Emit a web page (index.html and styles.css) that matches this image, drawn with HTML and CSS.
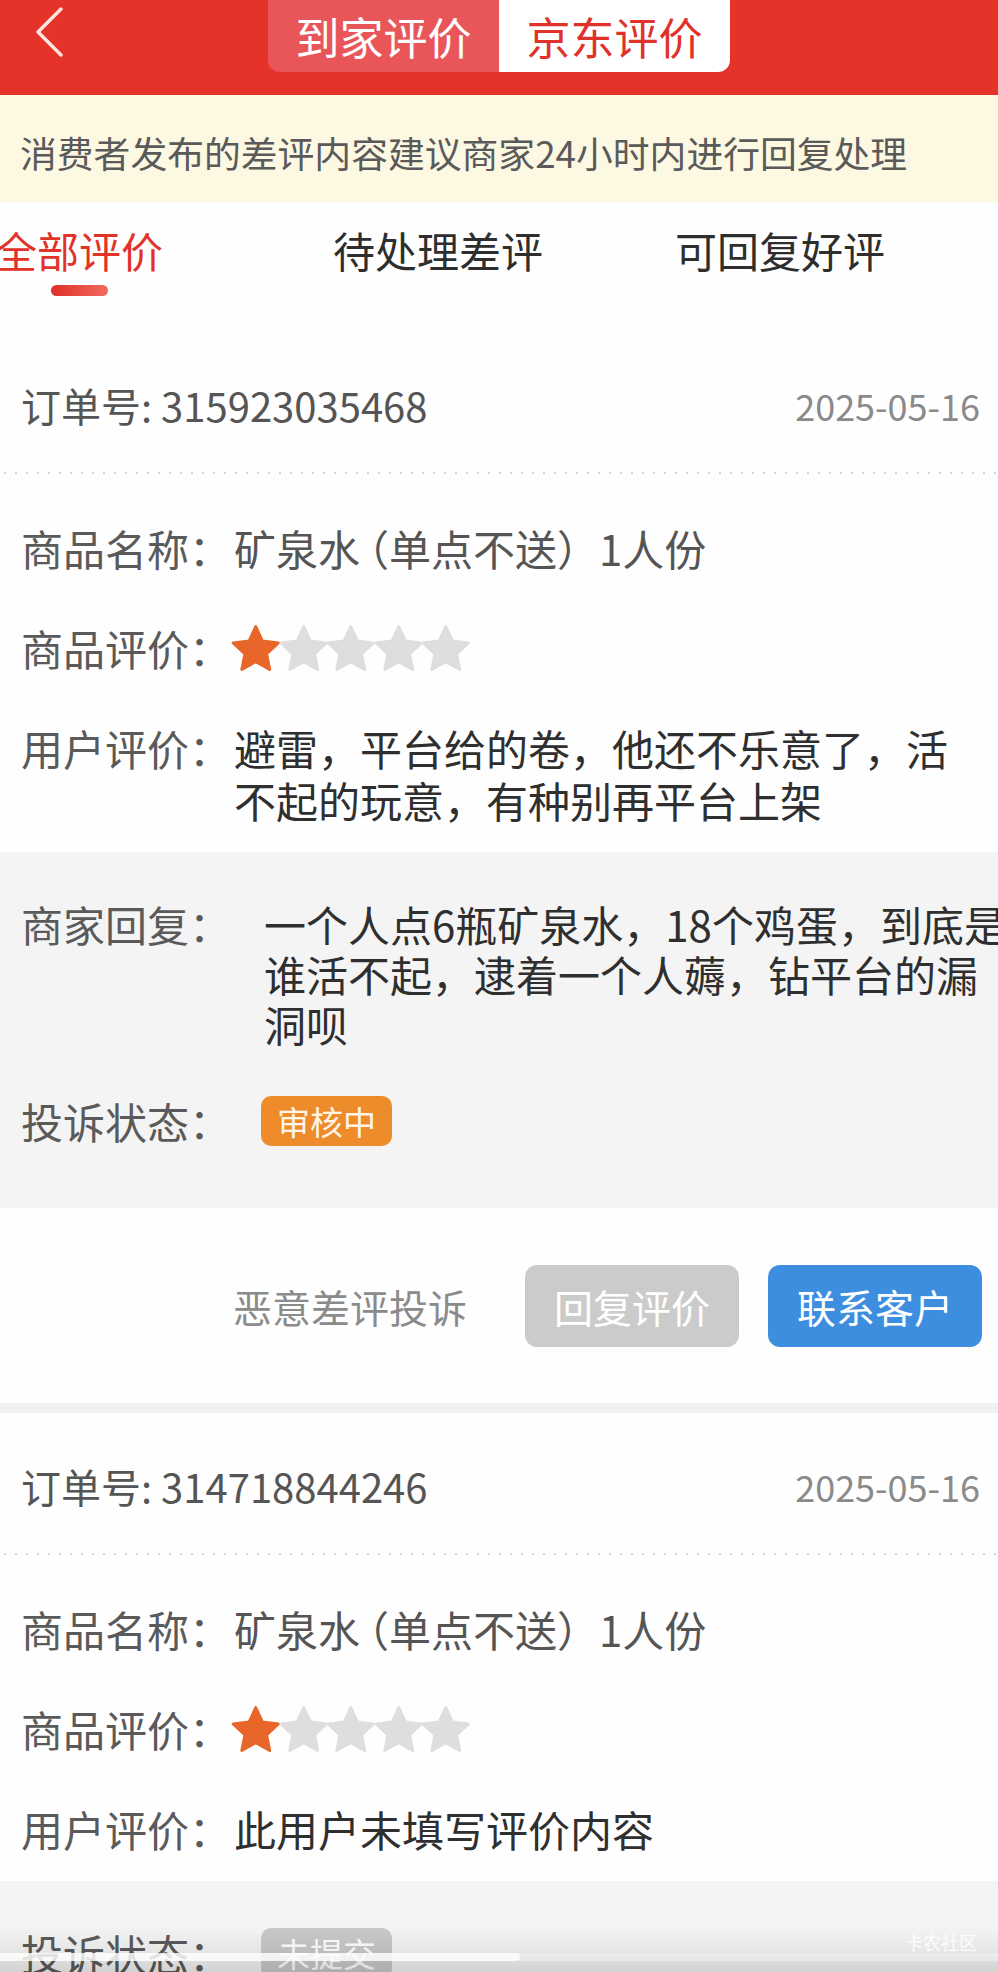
FILE: index.html
```html
<!DOCTYPE html>
<html lang="zh-CN">
<head>
<meta charset="utf-8">
<title>京东评价</title>
<link rel="stylesheet" href="styles.css">
</head>
<body>
<div class="page">
  <header class="topbar">
    <div class="topbar-left">
      <svg class="back" width="40" height="60" viewBox="0 0 40 60"><polyline points="31,7 8,30 31,53" fill="none" stroke="#fde4df" stroke-width="3.5" stroke-linecap="round" stroke-linejoin="round"/></svg>
    </div>
    <div class="seg">
      <span class="seg-item">到家评价</span>
      <span class="seg-item seg-active">京东评价</span>
    </div>
    <div class="topbar-right"></div>
  </header>

  <div class="notice">消费者发布的差评内容建议商家24小时内进行回复处理</div>

  <nav class="tabs">
    <div class="tab tab-active"><span class="tab-text">全部评价</span><span class="tab-line"></span></div>
    <div class="tab tab-2"><span class="tab-text">待处理差评</span></div>
    <div class="tab tab-3"><span class="tab-text">可回复好评</span></div>
  </nav>

  <section class="card">
    <div class="order">
      <span class="order-no">订单号: 315923035468</span>
      <span class="order-date">2025-05-16</span>
    </div>
    <div class="dots"></div>
    <div class="fields">
      <div class="field"><span class="label">商品名称：</span><span class="value muted">矿泉水<span class="halt">（</span>单点不送）1人份</span></div>
      <div class="field"><span class="label">商品评价：</span>
        <span class="stars">
          <svg class="star on" viewBox="0 0 48 48"><polygon points="24,2.3 30.76,17 46.83,18.88 34.94,29.85 38.11,45.72 24,37.8 9.89,45.72 13.06,29.85 1.17,18.88 17.24,17"/></svg>
          <svg class="star" viewBox="0 0 48 48"><polygon points="24,2.3 30.76,17 46.83,18.88 34.94,29.85 38.11,45.72 24,37.8 9.89,45.72 13.06,29.85 1.17,18.88 17.24,17"/></svg>
          <svg class="star" viewBox="0 0 48 48"><polygon points="24,2.3 30.76,17 46.83,18.88 34.94,29.85 38.11,45.72 24,37.8 9.89,45.72 13.06,29.85 1.17,18.88 17.24,17"/></svg>
          <svg class="star" viewBox="0 0 48 48"><polygon points="24,2.3 30.76,17 46.83,18.88 34.94,29.85 38.11,45.72 24,37.8 9.89,45.72 13.06,29.85 1.17,18.88 17.24,17"/></svg>
          <svg class="star" viewBox="0 0 48 48"><polygon points="24,2.3 30.76,17 46.83,18.88 34.94,29.85 38.11,45.72 24,37.8 9.89,45.72 13.06,29.85 1.17,18.88 17.24,17"/></svg>
        </span>
      </div>
      <div class="field"><span class="label">用户评价：</span><span class="value">避雷，平台给的卷，他还不乐意了，活不起的玩意，有种别再平台上架</span></div>
    </div>
    <div class="reply-box">
      <div class="rfield"><span class="rlabel">商家回复：</span><span class="rvalue">一个人点6瓶矿泉水，18个鸡蛋，到底是谁活不起，逮着一个人薅，钻平台的漏洞呗</span></div>
      <div class="rfield"><span class="rlabel">投诉状态：</span><span class="badge badge-orange">审核中</span></div>
    </div>
    <div class="actions">
      <span class="complain">恶意差评投诉</span>
      <span class="btn btn-gray">回复评价</span>
      <span class="btn btn-blue">联系客户</span>
    </div>
  </section>

  <section class="card">
    <div class="order">
      <span class="order-no">订单号: 314718844246</span>
      <span class="order-date">2025-05-16</span>
    </div>
    <div class="dots"></div>
    <div class="fields">
      <div class="field"><span class="label">商品名称：</span><span class="value muted">矿泉水<span class="halt">（</span>单点不送）1人份</span></div>
      <div class="field"><span class="label">商品评价：</span>
        <span class="stars">
          <svg class="star on" viewBox="0 0 48 48"><polygon points="24,2.3 30.76,17 46.83,18.88 34.94,29.85 38.11,45.72 24,37.8 9.89,45.72 13.06,29.85 1.17,18.88 17.24,17"/></svg>
          <svg class="star" viewBox="0 0 48 48"><polygon points="24,2.3 30.76,17 46.83,18.88 34.94,29.85 38.11,45.72 24,37.8 9.89,45.72 13.06,29.85 1.17,18.88 17.24,17"/></svg>
          <svg class="star" viewBox="0 0 48 48"><polygon points="24,2.3 30.76,17 46.83,18.88 34.94,29.85 38.11,45.72 24,37.8 9.89,45.72 13.06,29.85 1.17,18.88 17.24,17"/></svg>
          <svg class="star" viewBox="0 0 48 48"><polygon points="24,2.3 30.76,17 46.83,18.88 34.94,29.85 38.11,45.72 24,37.8 9.89,45.72 13.06,29.85 1.17,18.88 17.24,17"/></svg>
          <svg class="star" viewBox="0 0 48 48"><polygon points="24,2.3 30.76,17 46.83,18.88 34.94,29.85 38.11,45.72 24,37.8 9.89,45.72 13.06,29.85 1.17,18.88 17.24,17"/></svg>
        </span>
      </div>
      <div class="field"><span class="label">用户评价：</span><span class="value">此用户未填写评价内容</span></div>
    </div>
    <div class="reply-box">
      <div class="rfield"><span class="rlabel">投诉状态：</span><span class="badge badge-gray">未提交</span></div>
    </div>
  </section>

  <div class="video-overlay">
    <div class="progress"><div class="progress-fill"></div></div>
    <span class="watermark">卡农社区</span>
  </div>
</div>
</body>
</html>
```

FILE: styles.css
```css
html, body {
  margin: 0;
  padding: 0;
  background: #ffffff;
}

.page {
  position: relative;
  width: 998px;
  height: 1972px;
  overflow: hidden;
  background: #f1f1f1;
  font-family: "Noto Sans CJK SC", "Noto Sans", sans-serif;
}

/* ---------- top bar ---------- */
.topbar {
  height: 95px;
  background: #e6332a;
  display: grid;
  grid-template-columns: 1fr auto 1fr;
  align-items: start;
}

.topbar-left {
  padding: 2px 0 0 30px;
}

.back {
  display: block;
}

.seg {
  display: flex;
  height: 72px;
  border-radius: 0 0 12px 12px;
  overflow: hidden;
}

.seg-item {
  width: 231px;
  height: 72px;
  line-height: 72px;
  text-align: center;
  font-size: 44px;
  color: #ffffff;
  background: #e9565a;
}

.seg-active {
  background: #ffffff;
  color: #e0322a;
}

/* ---------- notice ---------- */
.notice {
  height: 107px;
  box-sizing: border-box;
  padding: 6px 0 0 20px;
  display: flex;
  align-items: center;
  background: #fcf8e2;
  color: #5a5a5a;
  font-size: 36.8px;
  white-space: nowrap;
}

/* ---------- tabs ---------- */
.tabs {
  display: flex;
  align-items: flex-start;
  background: #fefefe;
  padding: 24px 0 36px 0;
}

.tab {
  display: flex;
  flex-direction: column;
  align-items: center;
}

.tab-text {
  font-size: 42px;
  line-height: 48px;
  color: #2e2e2e;
  white-space: nowrap;
}

.tab-active {
  margin-left: -5px;
}

.tab-active .tab-text {
  color: #e2332a;
}

.tab-line {
  margin-top: 11px;
  width: 57px;
  height: 11px;
  border-radius: 6px;
  background: linear-gradient(90deg, #df2f28, #f26a60);
}

.tab-2 {
  margin-left: 170px;
}

.tab-3 {
  margin-left: 132px;
}

/* ---------- card ---------- */
.card {
  background: #fefefe;
  margin-bottom: 10px;
}

.order {
  display: flex;
  justify-content: space-between;
  align-items: center;
  padding: 49px 18px 43px 21px;
  line-height: 48px;
}

.order-no {
  font-size: 40px;
  color: #555555;
}

.order-date {
  font-size: 36px;
  color: #8a8a8a;
}

.dots {
  height: 2px;
  background-image: repeating-linear-gradient(90deg, #d4d4d4 0 2px, transparent 2px 11px);
  background-position: 4px 0;
}

.fields {
  display: flex;
  flex-direction: column;
  gap: 48px;
  padding: 48px 18px 26px 21px;
}

.field {
  display: flex;
  align-items: flex-start;
}

.label {
  flex: none;
  width: 213px;
  font-size: 42px;
  line-height: 52px;
  color: #5a5a5a;
}

.value {
  flex: 1;
  min-width: 0;
  font-size: 42px;
  line-height: 52px;
  color: #2f2f2f;
}

.value.muted {
  color: #555555;
}

.halt {
  font-feature-settings: "halt" 1;
  margin-left: 8px;
}

.stars {
  display: flex;
  align-items: center;
  height: 52px;
  margin-left: -2px;
}

.star {
  width: 47.5px;
  height: 48px;
  overflow: visible;
  fill: #dedede;
  stroke: #dedede;
  stroke-width: 3;
  stroke-linejoin: round;
}

.star.on {
  fill: #e8662a;
  stroke: #e8662a;
}

/* ---------- reply box ---------- */
.reply-box {
  background: #f4f4f4;
  overflow: hidden;
  display: flex;
  flex-direction: column;
  gap: 47px;
  padding: 47px 0 62px 21px;
}

.rfield {
  display: flex;
  align-items: center;
}

.rfield:first-child:not(:last-child) {
  align-items: flex-start;
}

.rlabel {
  flex: none;
  width: 243px;
  font-size: 42px;
  line-height: 50px;
  color: #5a5a5a;
}

.rvalue {
  flex: none;
  width: 750px;
  font-size: 42px;
  line-height: 50px;
  color: #2f2f2f;
}

.badge {
  margin-left: -3px;
  height: 50px;
  line-height: 50px;
  padding: 0 16px;
  border-radius: 10px;
  font-size: 33px;
  color: #fff6e8;
}

.badge-orange {
  background: #ee8c2c;
}

.badge-gray {
  background: #c9c9c9;
  color: #ffffff;
}

/* ---------- actions ---------- */
.actions {
  display: flex;
  justify-content: flex-end;
  align-items: center;
  padding: 57px 16px 56px 0;
}

.complain {
  font-size: 39px;
  color: #8b8b8b;
  margin-right: 58px;
}

.btn {
  width: 214px;
  height: 82px;
  border-radius: 12px;
  display: flex;
  align-items: center;
  justify-content: center;
  font-size: 39px;
  color: #ffffff;
}

.btn-gray {
  background: #cbcbcb;
  margin-right: 29px;
}

.btn-blue {
  background: #3e8ee0;
}

/* ---------- video overlay at bottom ---------- */
.video-overlay {
  position: absolute;
  left: 0;
  right: 0;
  bottom: 0;
  height: 47px;
  background: linear-gradient(180deg, rgba(0,0,0,0) 0%, rgba(0,0,0,0.05) 50%, rgba(0,0,0,0.14) 100%);
}

.progress {
  position: absolute;
  left: 0;
  right: 0;
  top: 28px;
  height: 8px;
  background: rgba(255,255,255,0.3);
}

.progress-fill {
  width: 520px;
  height: 8px;
  border-radius: 0 4px 4px 0;
  background: rgba(255,255,255,0.75);
}

.watermark {
  position: absolute;
  right: 21px;
  top: 6px;
  font-size: 18px;
  line-height: 22px;
  color: rgba(255,255,255,0.9);
}
```
